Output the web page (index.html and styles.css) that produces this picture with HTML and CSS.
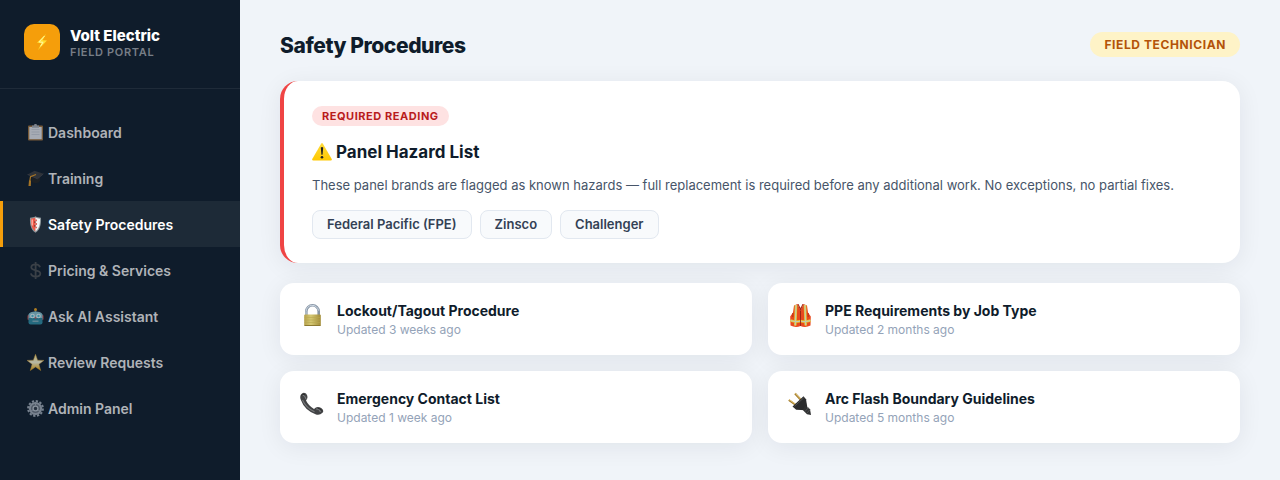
FILE: index.html
```html
<!DOCTYPE html>
<html lang="en">
<head>
    <meta charset="UTF-8">
    <meta name="viewport" content="width=device-width, initial-scale=1.0">
    <title>Volt Electric - Field Portal</title>
    <link rel="stylesheet" href="styles.css">
</head>
<body>
    <div class="app">
        <aside class="sidebar">
            <div class="brand">
                <div class="brand-logo">
                    <svg width="18" height="18" viewBox="0 0 18 18" aria-hidden="true">
                        <path d="M13 1 4 9.800l4.500.4L5 17l9-9.500-4.400-.3z" fill="#ffdf32"/>
                        <path d="M11.500 3 6 8.900l4 .4-2.500 4" fill="none" stroke="#fff7a8"/>
                    </svg>
                </div>
                <div>
                    <div class="brand-name">Volt Electric</div>
                    <div class="brand-sub">Field Portal</div>
                </div>
            </div>

            <nav class="nav">
                <a class="nav-item" href="#dashboard">
                    <svg class="nav-icon" viewBox="0 0 17 17" aria-hidden="true">
                        <rect x="1" y="1.500" width="15" height="15" rx="1" fill="#a5753e"/>
                        <rect x="2.300" y="3" width="12.400" height="12.200" fill="#e6e8ee"/>
                        <path d="M4.500 5.500h8M4.500 8h8M4.500 10.500h8" stroke="#cdd2dc"/>
                        <path d="M5 1.500h2L7.500 0h2L10 1.500h2v2.200H5z" fill="#a9adb5"/>
                    </svg>
                    Dashboard
                </a>
                <a class="nav-item" href="#training">
                    <svg class="nav-icon" viewBox="0 0 17 17" aria-hidden="true">
                        <path d="M4.500 6v5.500c3 2.500 6 2.200 8.500-.5V6z" fill="#222"/>
                        <path d="M.5 4.500 7.500.8l9 3-6 5z" fill="#3d3d40"/>
                        <path d="M.5 4.500l10 4.300 6-5" fill="none" stroke="#55565a" stroke-width=".6"/>
                        <path d="M9 4.500 3.500 6.800 2.800 11" fill="none" stroke="#e79b25" stroke-width="1.200"/>
                        <path d="M2 10.500h2l-.2 5.500H1.500z" fill="#e79b25"/>
                    </svg>
                    Training
                </a>
                <a class="nav-item active" href="#safety" aria-current="page">
                    <svg class="nav-icon" viewBox="0 0 17 17" aria-hidden="true">
                        <path d="M8.500.3C6.800 1.300 5 1.700 3 1.800 2.700 8 3.500 13.500 8.500 16.800 13.500 13.500 14.300 8 14 1.800 12 1.700 10.200 1.300 8.500.3z" fill="#8c969a"/>
                        <path d="M8.500 1.600C7 2.400 5.700 2.700 4 2.800 3.900 8.500 4.600 12.500 8.500 15.500z" fill="#ef5949"/>
                        <path d="M8.500 1.600c1.500.8 2.800 1.100 4.500 1.200.1 5.700-.6 9.700-4.500 12.700z" fill="#f4f5f5"/>
                        <path d="M8.500 3.500h1.300v1.800H8.500zM8.500 7.100h1.300v1.800H8.500zM8.500 10.700h1.300v1.500H8.500z" fill="#d64236"/>
                        <path d="M7.200 5.300h1.300v1.800H7.200zM7.200 8.900h1.300v1.800H7.200z" fill="#8f332d"/>
                        <path d="M5.200 3.500v6" stroke="#ffb5a9" stroke-width="1.300"/>
                    </svg>
                    Safety Procedures
                </a>
                <a class="nav-item" href="#pricing">
                    <svg class="nav-icon" viewBox="0 0 17 17" aria-hidden="true">
                        <path d="M13 5.200C12.500 3.200 11 2.300 8.700 2.300 6 2.300 4.300 3.500 4.300 5.300c0 4.400 9 1.800 9 6.300 0 1.900-1.800 3-4.500 3-2.800 0-4.500-1.100-4.900-3.200M8.600 0v17" fill="none" stroke="#4d5053" stroke-width="1.800"/>
                    </svg>
                    Pricing &amp; Services
                </a>
                <a class="nav-item" href="#assistant">
                    <svg class="nav-icon" viewBox="0 0 17 17" aria-hidden="true">
                        <path d="M8.500 2v3" stroke="#6b8790" stroke-width="1.500"/>
                        <circle cx="8.500" cy="1.500" r="1.500" fill="#f3a71d"/>
                        <rect x=".5" y="7" width="2" height="5" rx="1" fill="#d34a4a"/>
                        <rect x="14.500" y="7" width="2" height="5" rx="1" fill="#d34a4a"/>
                        <path d="M1.500 6.500C2 4.500 5 3.500 8.500 3.500s6.500 1 7 3V11h-14z" fill="#8ac6d4"/>
                        <path d="M1.500 10h14v4.500q0 2-2 2h-10q-2 0-2-2z" fill="#2f8ba3"/>
                        <circle cx="5.500" cy="8" r="2.300" fill="#e9fbff"/>
                        <circle cx="11.500" cy="8" r="2.300" fill="#e9fbff"/>
                        <circle cx="5.500" cy="8" r="1.200" fill="#4fc0d6"/>
                        <circle cx="11.500" cy="8" r="1.200" fill="#4fc0d6"/>
                        <path d="m8.500 8.500 1.100 2H7.400z" fill="#e34a43"/>
                        <path d="M5.500 13.200h6" stroke="#9cbcc6" stroke-width="1.200"/>
                    </svg>
                    Ask AI Assistant
                </a>
                <a class="nav-item" href="#reviews">
                    <svg class="nav-icon" viewBox="0 0 17 17" aria-hidden="true">
                        <defs>
                            <linearGradient id="star" x1="0" y1="0" x2="0" y2="1">
                                <stop offset="0" stop-color="#ffe98c"/>
                                <stop offset=".5" stop-color="#fffad8"/>
                                <stop offset="1" stop-color="#f0a900"/>
                            </linearGradient>
                        </defs>
                        <path d="m8.500.3 2.100 5.900 6.300.2-5 3.900 1.800 6.200-5.200-3.600-5.200 3.600 1.800-6.200-5-3.900 6.300-.2z" fill="url(#star)" stroke="#e2a83a" stroke-width=".5"/>
                    </svg>
                    Review Requests
                </a>
                <a class="nav-item" href="#admin">
                    <svg class="nav-icon" viewBox="0 0 17 17" aria-hidden="true">
                        <circle cx="8.500" cy="8.500" r="7.400" fill="none" stroke="#a4adb9" stroke-width="2" stroke-dasharray="2.300 1.575"/>
                        <circle cx="8.500" cy="8.500" r="5.600" fill="#6b7481" stroke="#a4adb9" stroke-width="2"/>
                        <circle cx="8.500" cy="8.500" r="2.400" fill="#303b48" stroke="#bbc3cd" stroke-width="1.300"/>
                        <path d="M8.500 2.500v3M3 11.500 6 10M14 11.500 11 10" stroke="#a4adb9"/>
                    </svg>
                    Admin Panel
                </a>
            </nav>
        </aside>

        <main class="main">
            <header class="page-header">
                <h1>Safety Procedures</h1>
                <span class="role-badge">Field Technician</span>
            </header>

            <section class="hazard-card">
                <span class="tag">Required Reading</span>
                <h2>
                    <svg width="20" height="20" viewBox="0 0 20 20" aria-hidden="true">
                        <defs>
                            <linearGradient id="warn" x1="0" y1="0" x2="0" y2="1">
                                <stop offset="0" stop-color="#ffdc3c"/>
                                <stop offset="1" stop-color="#ffc800"/>
                            </linearGradient>
                        </defs>
                        <path d="M9.100 1.800q.9-1.500 1.800 0l8.700 15q.8 1.700-1 1.700H1.400q-1.800 0-1-1.700z" fill="url(#warn)"/>
                        <path d="M8.800 5.500q1.200-.8 2.400 0l-.6 7.200H9.400z" fill="#222"/>
                        <circle cx="10" cy="15.300" r="1.300" fill="#222"/>
                    </svg>
                    Panel Hazard List
                </h2>
                <p>These panel brands are flagged as known hazards — full replacement is required before any additional work. No exceptions, no partial fixes.</p>
                <ul class="chips">
                    <li>Federal Pacific (FPE)</li>
                    <li>Zinsco</li>
                    <li>Challenger</li>
                </ul>
            </section>

            <section class="doc-grid">
                <article class="doc-card">
                    <svg class="doc-icon" viewBox="0 0 25 25" aria-hidden="true">
                        <defs>
                            <linearGradient id="brass" x1="0" y1="0" x2="1" y2="0">
                                <stop offset="0" stop-color="#b5a04b"/>
                                <stop offset=".4" stop-color="#d5c873"/>
                                <stop offset="1" stop-color="#a18b38"/>
                            </linearGradient>
                        </defs>
                        <path d="M6.300 13V8.500a6.200 6.200 0 0 1 12.400 0V13" fill="none" stroke="#8795a5" stroke-width="2.600"/>
                        <path d="M6 12V8.500a6.300 6.300 0 0 1 12.500-1" fill="none" stroke="#d0dbe6"/>
                        <rect x="4.200" y="11.500" width="16.600" height="11.500" rx="1" fill="url(#brass)"/>
                        <path d="M4.500 14.500h16M4.500 17h16M4.500 19.500h16" stroke="#b9a850" stroke-width=".6"/>
                        <path d="M4.500 22.500h16" stroke="#8c7930"/>
                    </svg>
                    <div>
                        <h3>Lockout/Tagout Procedure</h3>
                        <div class="updated">Updated 3 weeks ago</div>
                    </div>
                </article>
                <article class="doc-card">
                    <svg class="doc-icon" viewBox="0 0 25 25" aria-hidden="true">
                        <path d="M6 2.500 9.500 1l3 7 3-7L19 2.500l1 7 2.800 4-.3 9q-5 2.500-10 .5-5 2-10-.5l-.3-9L5 9.500z" fill="#e8491f"/>
                        <path d="M9.500 1h6l-3 7.500z" fill="#a62c19"/>
                        <path d="M10.500 1h4l-2 4z" fill="#fff"/>
                        <path d="M8 2 7.300 22.500M17 2l.7 20.500M2.500 17.500q5 1.800 10 .5 5 1.300 10-.5" fill="none" stroke="#e9c52d" stroke-width="2.600"/>
                        <path d="M8 2 7.300 22.500M17 2l.7 20.500M2.500 17.500q5 1.800 10 .5 5 1.300 10-.5" fill="none" stroke="#c3ccae" stroke-width="1.200"/>
                        <path d="M12.500 8v15" stroke="#8f2413" stroke-width=".9"/>
                        <path d="M4.800 10v4M20.200 10v4" stroke="#b93218"/>
                    </svg>
                    <div>
                        <h3>PPE Requirements by Job Type</h3>
                        <div class="updated">Updated 2 months ago</div>
                    </div>
                </article>
                <article class="doc-card">
                    <svg class="doc-icon" viewBox="0 0 25 25" aria-hidden="true">
                        <path d="M1 3.500Q3 .5 6 2.500q2.500 3 .8 5.700l-.8 1.200q2.500 5.200 8 8.500l1.500-1.100q2.500-1.500 5.700.3 3.300 2.300 1.300 4.700-3 3-7 1.500Q4.500 19 .9 9-.5 6 1 3.500z" fill="#424345"/>
                        <path d="M2.500 4q2.500.5 3.500 4M16 18q3.500-.5 4.500 3M2.500 9q3.500 8 12 11.800" fill="none" stroke="#77797b" stroke-width="1.100"/>
                        <path d="M1.500 4.500q1.500-2 3.500-.7M18 17.500q3 .2 3.700 2" fill="none" stroke="#222" stroke-width=".8"/>
                    </svg>
                    <div>
                        <h3>Emergency Contact List</h3>
                        <div class="updated">Updated 1 week ago</div>
                    </div>
                </article>
                <article class="doc-card">
                    <svg class="doc-icon" viewBox="0 0 25 25" aria-hidden="true">
                        <path d="m.8 9 7 5M7 2.500l6 6.500" stroke="#a37d2e" stroke-width="2"/>
                        <path d="m1 8.500 7 5M7.300 2.300l6 6.500" stroke="#e8c979" stroke-width=".9"/>
                        <path d="m4.500 15.500 11-10.300 2.500 3 1.500 9-1.800 2-9.500-.4z" fill="#2b2c2d"/>
                        <path d="m17 15 5 3 1 6-4-.7-4.200-4.300z" fill="#303132"/>
                        <path d="m6.500 15.300 9.200-8.500M17 20.500l3.500-4M19 22l3-3.500" stroke="#5a5c5d" stroke-width=".8"/>
                    </svg>
                    <div>
                        <h3>Arc Flash Boundary Guidelines</h3>
                        <div class="updated">Updated 5 months ago</div>
                    </div>
                </article>
            </section>
        </main>
    </div>
</body>
</html>
```
FILE: styles.css
```css
* {
    box-sizing: border-box;
    margin: 0;
    padding: 0;
}
body {
    font-family: Inter, 'Liberation Sans', sans-serif;
    background: #f0f4f9;
    color: #0f1c2b;
}
.app {
    display: flex;
    min-height: 100vh;
}

/* Sidebar */
.sidebar {
    width: 240px;
    flex-shrink: 0;
    background: #0f1c2b;
}
.brand {
    display: flex;
    align-items: center;
    gap: 10px;
    padding: 24px 24px 28px;
    border-bottom: 1px solid #1f2b39;
}
.brand-logo {
    display: flex;
    align-items: center;
    justify-content: center;
    width: 36px;
    height: 36px;
    border-radius: 10px;
    background: #f59e0b;
}
.brand-name {
    color: #fff;
    font-size: 15px;
    font-weight: 800;
    line-height: 20px;
}
.brand-sub {
    color: #777e87;
    font-size: 11px;
    font-weight: 600;
    line-height: 12px;
    letter-spacing: 0.06em;
    text-transform: uppercase;
}
.nav {
    padding: 20px 0;
}
.nav-item {
    display: flex;
    align-items: center;
    gap: 4px;
    height: 46px;
    padding: 0 24px;
    border-left: 3px solid transparent;
    color: #afb3b8;
    font-size: 14px;
    font-weight: 600;
    text-decoration: none;
}
.nav-item.active {
    background: #1d2a37;
    border-left-color: #f59e0b;
    color: #fff;
}
.nav-icon {
    width: 17px;
    height: 17px;
    opacity: 0.7;
}
.active .nav-icon {
    opacity: 1;
}

/* Main content */
.main {
    flex: 1;
    min-width: 0;
    padding: 32px 40px;
}
.page-header {
    display: flex;
    align-items: flex-start;
    justify-content: space-between;
    margin-bottom: 22px;
}
h1 {
    font-size: 21px;
    font-weight: 800;
    line-height: 27px;
    letter-spacing: -0.02em;
}
.role-badge {
    padding: 5px 14px;
    border-radius: 20px;
    background: #fef3c7;
    color: #b45309;
    font-size: 12px;
    font-weight: 700;
    line-height: 15px;
    letter-spacing: 0.05em;
    text-transform: uppercase;
}
.hazard-card {
    margin-bottom: 20px;
    padding: 25px 28px 24px;
    border-left: 4px solid #ef4444;
    border-radius: 18px;
    background: #fff;
    box-shadow: 0 4px 24px rgba(15, 28, 43, 0.07);
}
.tag {
    display: block;
    width: fit-content;
    margin-bottom: 14px;
    padding: 3px 10px;
    border-radius: 20px;
    background: #fee2e2;
    color: #b91c1c;
    font-size: 11px;
    font-weight: 700;
    line-height: 14px;
    letter-spacing: 0.05em;
    text-transform: uppercase;
}
h2 {
    display: flex;
    align-items: center;
    gap: 4px;
    margin-bottom: 10px;
    font-size: 17px;
    font-weight: 700;
    line-height: 24px;
}
.hazard-card p {
    margin-bottom: 14px;
    color: #475569;
    font-size: 13px;
    line-height: 22px;
}
.chips {
    display: flex;
    flex-wrap: wrap;
    gap: 8px;
    list-style: none;
}
.chips li {
    padding: 6px 14px;
    border: 1px solid #e2e8f0;
    border-radius: 8px;
    background: #f8fafc;
    color: #334155;
    font-size: 13px;
    font-weight: 600;
    line-height: 15px;
}

/* Documents */
.doc-grid {
    display: grid;
    grid-template-columns: 1fr 1fr;
    gap: 16px;
}
.doc-card {
    display: flex;
    align-items: flex-start;
    gap: 12px;
    padding: 18px 20px;
    border-radius: 14px;
    background: #fff;
    box-shadow: 0 4px 24px rgba(15, 28, 43, 0.07);
}
.doc-icon {
    width: 25px;
    height: 25px;
    margin-top: 2px;
}
h3 {
    margin-bottom: 2px;
    font-size: 14px;
    font-weight: 700;
    line-height: 19px;
}
.updated {
    color: #94a3b8;
    font-size: 12px;
    line-height: 15px;
}
```
